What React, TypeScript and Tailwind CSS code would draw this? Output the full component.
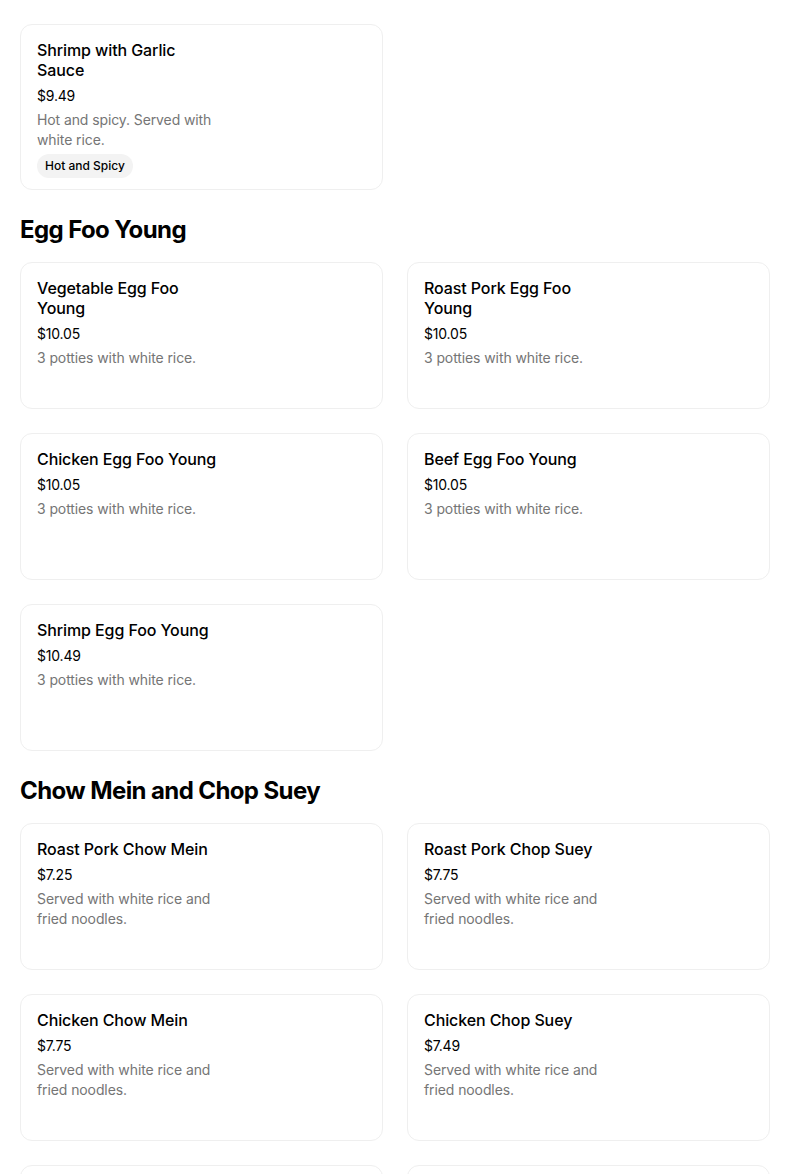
import React from "react";

type Item = {
  name: string;
  price: string;
  desc: string;
  tag?: string;
};

type Section = {
  title?: string;
  items: Item[];
};

const FONT = { fontFamily: "Inter, 'Noto Sans', sans-serif" };

// La página está desplazada: arrancamos en el último plato de la sección anterior.
const SECTIONS: Section[] = [
  {
    items: [
      {
        name: "Shrimp with Garlic Sauce",
        price: "$9.49",
        desc: "Hot and spicy. Served with white rice.",
        tag: "Hot and Spicy",
      },
    ],
  },
  {
    title: "Egg Foo Young",
    items: [
      { name: "Vegetable Egg Foo Young", price: "$10.05", desc: "3 potties with white rice." },
      { name: "Roast Pork Egg Foo Young", price: "$10.05", desc: "3 potties with white rice." },
      { name: "Chicken Egg Foo Young", price: "$10.05", desc: "3 potties with white rice." },
      { name: "Beef Egg Foo Young", price: "$10.05", desc: "3 potties with white rice." },
      { name: "Shrimp Egg Foo Young", price: "$10.49", desc: "3 potties with white rice." },
    ],
  },
  {
    title: "Chow Mein and Chop Suey",
    items: [
      { name: "Roast Pork Chow Mein", price: "$7.25", desc: "Served with white rice and fried noodles." },
      { name: "Roast Pork Chop Suey", price: "$7.75", desc: "Served with white rice and fried noodles." },
      { name: "Chicken Chow Mein", price: "$7.75", desc: "Served with white rice and fried noodles." },
      { name: "Chicken Chop Suey", price: "$7.49", desc: "Served with white rice and fried noodles." },
      { name: "Beef Chow Mein", price: "$7.99", desc: "Served with white rice and fried noodles." },
      { name: "Beef Chop Suey", price: "$7.99", desc: "Served with white rice and fried noodles." },
    ],
  },
];

function ItemCard({ item }: { item: Item }) {
  return (
    <div
      className={`min-h-[147px] rounded-xl border border-[#efefef] bg-white px-4 pt-[15px] ${
        item.tag ? "pb-[11px]" : "pb-4"
      }`}
    >
      <div className="flex w-[184px] flex-col">
        <div className="text-base font-medium leading-5 tracking-[-0.1px] text-black">{item.name}</div>
        <div className="mt-1.5 text-sm leading-5 tracking-[-0.2px] text-black">{item.price}</div>
        <div className="mt-1 text-sm leading-5 tracking-[-0.1px] text-[#757575]">{item.desc}</div>
        {item.tag && (
          <div className="mt-1 flex">
            <span className="rounded-full bg-[#f3f3f3] px-2 text-xs font-medium leading-6 text-black">
              {item.tag}
            </span>
          </div>
        )}
      </div>
    </div>
  );
}

export default function App() {
  return (
    <div className="h-[1174px] overflow-hidden bg-white" style={FONT}>
      <div className="ml-5 w-[750px] pt-6">
        {SECTIONS.map((s, i) => (
          <section key={i} className={i > 0 ? "mt-6" : ""}>
            {s.title && (
              <h2 className="mb-4 text-2xl font-bold leading-8 tracking-[-0.6px] text-black">{s.title}</h2>
            )}
            <div className="grid grid-cols-2 gap-6">
              {s.items.map((it) => (
                <ItemCard key={it.name} item={it} />
              ))}
            </div>
          </section>
        ))}
      </div>
    </div>
  );
}
